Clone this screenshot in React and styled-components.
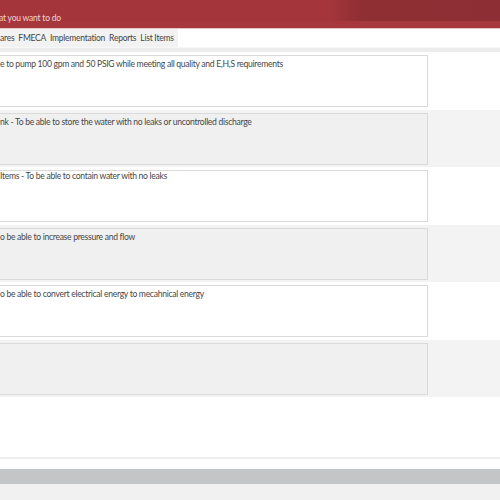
import styled, { createGlobalStyle } from 'styled-components';

const Global = createGlobalStyle`
  html, body { margin: 0; padding: 0; background: #fff; overflow: hidden; }
  body { font-family: Lato, "Open Sans", "Liberation Sans", sans-serif; }
`;

const Page = styled.div`
  width: 500px;
  height: 500px;
  display: flex;
  flex-direction: column;
  background: #fff;
`;

const Header = styled.div`
  height: 29px;
  background: linear-gradient(90deg, #a4363b 0%, #a4363b 66%, #8f2f34 72%, #8c2e33 100%);
  position: relative;
  display: flex;
  align-items: flex-end;
  border-bottom: 1px solid #e7c4c4;
  box-sizing: border-box;
`;

const HeaderBand = styled.div`
  position: absolute;
  left: 0;
  right: 0;
  bottom: 0;
  height: 7px;
  background: #a6373c;
`;

const Prompt = styled.span`
  position: relative;
  font-size: 8.5px;
  letter-spacing: -0.2px;
  color: #f3d2d3;
  padding: 0 0 5px 0;
  margin-left: -1px;
`;

const TabBar = styled.div`
  height: 18px;
  display: flex;
  align-items: center;
  background: #fff;
`;

const TabGroup = styled.div`
  display: flex;
  height: 100%;
  align-items: center;
  background: #f2f2f2;
  padding-right: 2px;
`;

const Tab = styled.span`
  font-size: 8.5px;
  letter-spacing: -0.25px;
  color: #444;
  padding: 0 2px;
  margin-left: ${p => (p.$first ? '-2px' : '0')};
`;

const Divider = styled.div`
  height: 5px;
  background: #ececec;
  border-top: 1px solid #f7f7f7;
  box-sizing: border-box;
`;

const Row = styled.div`
  height: 57.5px;
  background: ${p => (p.$alt ? '#f3f3f3' : '#fff')};
  padding: 3px 72px 2.5px 0;
  box-sizing: border-box;
`;

const Field = styled.div`
  height: 100%;
  background: ${p => (p.$alt ? '#f0f0f0' : '#fff')};
  border: 1px solid #dadada;
  border-left: none;
  box-sizing: border-box;
  font-size: 8.6px;
  letter-spacing: -0.3px;
  color: #474747;
  padding: 3px 0 0 ${p => p.$indent || 0}px;
  white-space: nowrap;
  overflow: hidden;
`;

const Spacer = styled.div`
  flex: 1;
  border-bottom: 2px solid #ededed;
`;

const Gap = styled.div`
  height: 10px;
  background: #fff;
`;

const ScrollBar = styled.div`
  height: 15px;
  background: #c4c5c7;
`;

const Footer = styled.div`
  height: 16px;
  background: #f1f1f1;
`;

const rows = [
  { text: 'e to pump 100 gpm and 50 PSIG while meeting all quality and E,H,S requirements', indent: 0 },
  { text: 'nk - To be able to store the water with no leaks or uncontrolled discharge', indent: 0 },
  { text: 'Items - To be able to contain water with no leaks', indent: -1 },
  { text: 'o be able to increase pressure and flow', indent: 0 },
  { text: 'o be able to convert electrical energy to mecahnical energy', indent: 0 },
  { text: '', indent: 0 },
];

const tabs = ['ares', 'FMECA', 'Implementation', 'Reports', 'List Items'];

export default function App() {
  return (
    <Page>
      <Global />
      <Header>
        <HeaderBand />
        <Prompt>at you want to do</Prompt>
      </Header>
      <TabBar>
        <TabGroup>
          {tabs.map((t, i) => (
            <Tab key={t} $first={i === 0}>{t}</Tab>
          ))}
        </TabGroup>
      </TabBar>
      <Divider />
      {rows.map((r, i) => (
        <Row key={i} $alt={i % 2 === 1}>
          <Field $alt={i % 2 === 1} $indent={r.indent}>{r.text}</Field>
        </Row>
      ))}
      <Spacer />
      <Gap />
      <ScrollBar />
      <Footer />
    </Page>
  );
}
